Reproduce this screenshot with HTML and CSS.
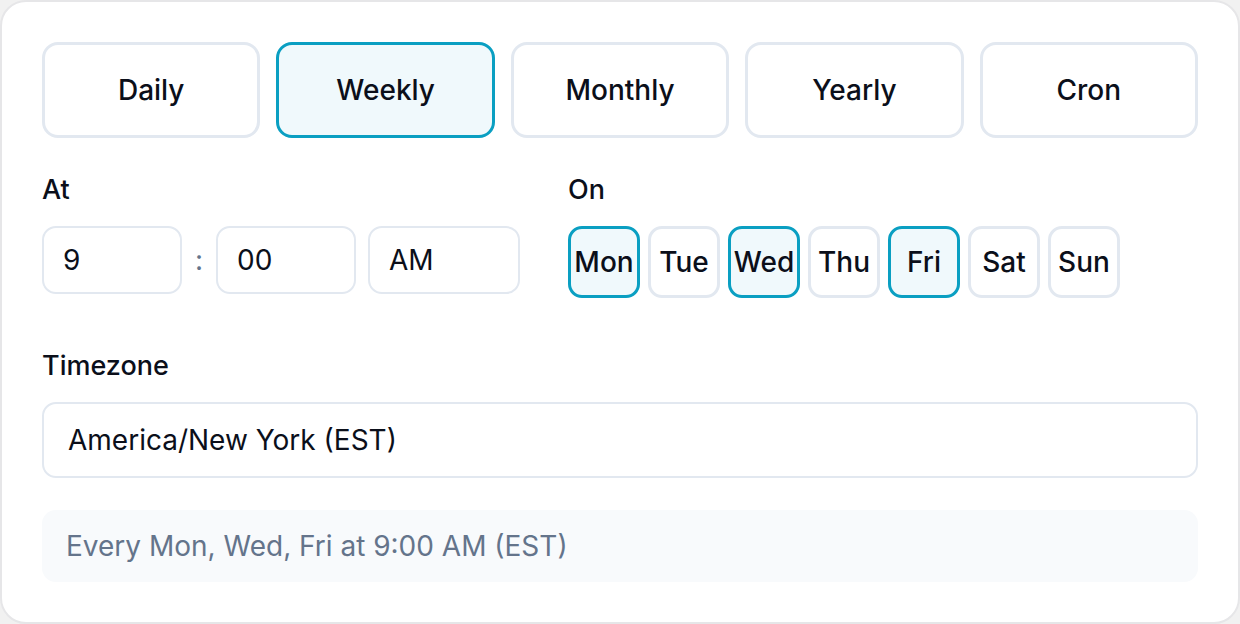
FILE: index.html
```html
<!DOCTYPE html>
<html lang="en">
<head>
  <meta charset="UTF-8" />
  <title>Schedule</title>
  <link rel="stylesheet" href="styles.css">
</head>
<body>
  <div class="card">
    <div class="modes">
      <button class="mode">Daily</button>
      <button class="mode active">Weekly</button>
      <button class="mode">Monthly</button>
      <button class="mode">Yearly</button>
      <button class="mode">Cron</button>
    </div>

    <div class="row">
      <div class="col-at">
        <div class="label">At</div>
        <div class="time">
          <div class="field hour">9</div>
          <span class="colon">:</span>
          <div class="field minute">00</div>
          <div class="field ampm">AM</div>
        </div>
      </div>
      <div class="col-on">
        <div class="label">On</div>
        <div class="days">
          <button class="day active">Mon</button>
          <button class="day">Tue</button>
          <button class="day active">Wed</button>
          <button class="day">Thu</button>
          <button class="day active">Fri</button>
          <button class="day">Sat</button>
          <button class="day">Sun</button>
        </div>
      </div>
    </div>

    <div class="label tz-label">Timezone</div>
    <div class="field tz">America/New York (EST)</div>

    <div class="summary">Every Mon, Wed, Fri at 9:00 AM (EST)</div>
  </div>
</body>
</html>
```

FILE: styles.css
```css
body, html {
  margin: 0; padding: 0; height: 100%; background: #f1f1f1;
  font-family: Inter, "Noto Sans", sans-serif;
  color: #0b0f1a;
}
.card {
  box-sizing: border-box;
  width: 1240px;
  height: 624px;
  background: white;
  border: 2px solid #e6e6e8;
  border-radius: 26px;
  padding: 40px;
}
.modes {
  display: flex;
  gap: 16px;
}
.mode {
  flex: 1;
  height: 96px;
  background: white;
  border: 3px solid #e2e8f0;
  border-radius: 16px;
  font-family: inherit;
  font-size: 28px;
  font-weight: 500;
  color: #0b0f1a;
  cursor: pointer;
}
.mode.active, .day.active {
  border-color: #0a9fc2;
  background: #f0f9fc;
}
.row {
  display: flex;
  gap: 48px;
  margin-top: 36px;
}
.col-at { width: 478px; }
.label {
  font-size: 27px;
  font-weight: 500;
  line-height: 32px;
  margin-bottom: 20px;
}
.time {
  display: flex;
  align-items: center;
}
.field {
  box-sizing: border-box;
  height: 68px;
  border: 2px solid #e2e8f0;
  border-radius: 14px;
  background: white;
  font-size: 28px;
  display: flex;
  align-items: center;
  padding-left: 19px;
}
.hour, .minute { width: 140px; }
.ampm { width: 152px; margin-left: 12px; }
.colon {
  width: 34px;
  text-align: center;
  color: #64748b;
  font-size: 28px;
}
.days {
  display: flex;
  gap: 8px;
}
.day {
  box-sizing: border-box;
  width: 72px;
  height: 72px;
  padding: 0;
  background: white;
  border: 3px solid #e2e8f0;
  border-radius: 14px;
  font-family: inherit;
  font-size: 28px;
  font-weight: 500;
  color: #0b0f1a;
  cursor: pointer;
}
.tz-label { margin-top: 52px; }
.tz {
  height: 76px;
  padding-left: 24px;
}
.summary {
  margin-top: 32px;
  height: 72px;
  background: #f8fafc;
  border-radius: 14px;
  color: #64748b;
  font-size: 28px;
  display: flex;
  align-items: center;
  padding-left: 24px;
}
```
